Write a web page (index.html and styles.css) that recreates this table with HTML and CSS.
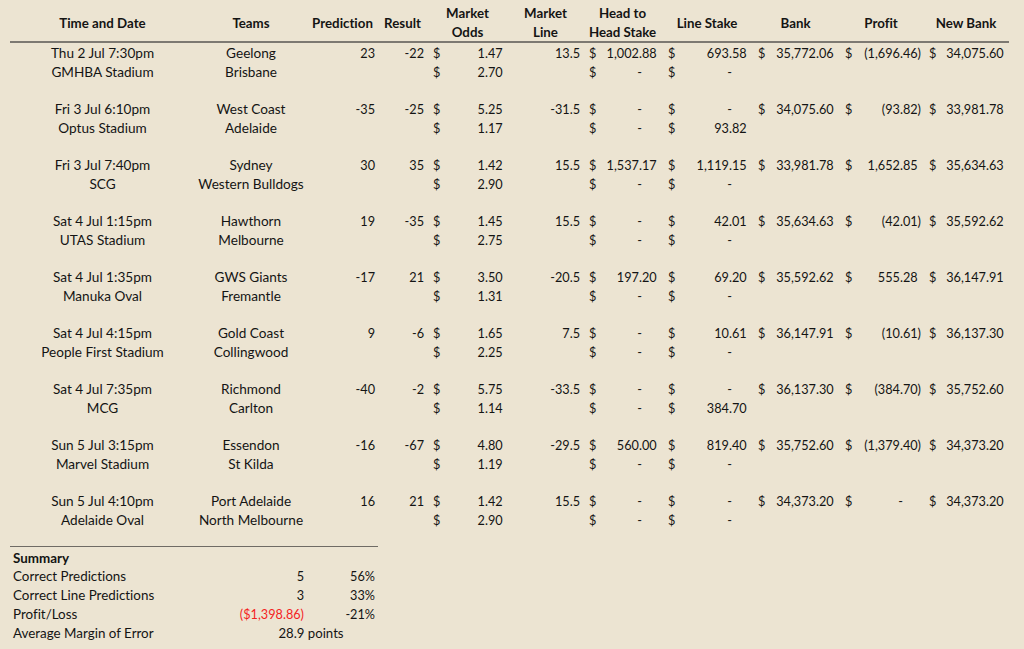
FILE: index.html
```html
<!DOCTYPE html>
<html lang="en">
<head>
<meta charset="utf-8">
<title>Tips</title>
<link rel="stylesheet" href="styles.css">
</head>
<body>
<div class="sheet">
  <div class="row head">
    <div class="h">Time and Date</div>
    <div class="h">Teams</div>
    <div class="h">Prediction</div>
    <div class="h">Result</div>
    <div class="h">Market<br>Odds</div>
    <div class="h">Market<br>Line</div>
    <div class="h">Head to<br>Head Stake</div>
    <div class="h">Line Stake</div>
    <div class="h">Bank</div>
    <div class="h">Profit</div>
    <div class="h">New Bank</div>
  </div>

  <div class="game">
    <div class="row">
      <div class="t">Thu 2 Jul 7:30pm</div><div class="t">Geelong</div><div class="r">23</div><div class="r">-22</div>
      <div class="acc"><span>$</span><span>1.47<i>)</i></span></div><div class="r">13.5</div>
      <div class="acc"><span>$</span><span>1,002.88<i>)</i></span></div>
      <div class="acc"><span>$</span><span>693.58<i>)</i></span></div>
      <div class="acc"><span>$</span><span>35,772.06<i>)</i></span></div>
      <div class="acc"><span>$</span><span>(1,696.46)</span></div>
      <div class="acc"><span>$</span><span>34,075.60<i>)</i></span></div>
    </div>
    <div class="row">
      <div class="t">GMHBA Stadium</div><div class="t">Brisbane</div><div></div><div></div>
      <div class="acc"><span>$</span><span>2.70<i>)</i></span></div><div></div>
      <div class="acc"><span>$</span><span>-<i>00)</i></span></div>
      <div class="acc"><span>$</span><span>-<i>00)</i></span></div>
    </div>
    <div class="row"></div>
  </div>

  <div class="game">
    <div class="row">
      <div class="t">Fri 3 Jul 6:10pm</div><div class="t">West Coast</div><div class="r">-35</div><div class="r">-25</div>
      <div class="acc"><span>$</span><span>5.25<i>)</i></span></div><div class="r">-31.5</div>
      <div class="acc"><span>$</span><span>-<i>00)</i></span></div>
      <div class="acc"><span>$</span><span>-<i>00)</i></span></div>
      <div class="acc"><span>$</span><span>34,075.60<i>)</i></span></div>
      <div class="acc"><span>$</span><span>(93.82)</span></div>
      <div class="acc"><span>$</span><span>33,981.78<i>)</i></span></div>
    </div>
    <div class="row">
      <div class="t">Optus Stadium</div><div class="t">Adelaide</div><div></div><div></div>
      <div class="acc"><span>$</span><span>1.17<i>)</i></span></div><div></div>
      <div class="acc"><span>$</span><span>-<i>00)</i></span></div>
      <div class="acc"><span>$</span><span>93.82<i>)</i></span></div>
    </div>
    <div class="row"></div>
  </div>

  <div class="game">
    <div class="row">
      <div class="t">Fri 3 Jul 7:40pm</div><div class="t">Sydney</div><div class="r">30</div><div class="r">35</div>
      <div class="acc"><span>$</span><span>1.42<i>)</i></span></div><div class="r">15.5</div>
      <div class="acc"><span>$</span><span>1,537.17<i>)</i></span></div>
      <div class="acc"><span>$</span><span>1,119.15<i>)</i></span></div>
      <div class="acc"><span>$</span><span>33,981.78<i>)</i></span></div>
      <div class="acc"><span>$</span><span>1,652.85<i>)</i></span></div>
      <div class="acc"><span>$</span><span>35,634.63<i>)</i></span></div>
    </div>
    <div class="row">
      <div class="t">SCG</div><div class="t">Western Bulldogs</div><div></div><div></div>
      <div class="acc"><span>$</span><span>2.90<i>)</i></span></div><div></div>
      <div class="acc"><span>$</span><span>-<i>00)</i></span></div>
      <div class="acc"><span>$</span><span>-<i>00)</i></span></div>
    </div>
    <div class="row"></div>
  </div>

  <div class="game">
    <div class="row">
      <div class="t">Sat 4 Jul 1:15pm</div><div class="t">Hawthorn</div><div class="r">19</div><div class="r">-35</div>
      <div class="acc"><span>$</span><span>1.45<i>)</i></span></div><div class="r">15.5</div>
      <div class="acc"><span>$</span><span>-<i>00)</i></span></div>
      <div class="acc"><span>$</span><span>42.01<i>)</i></span></div>
      <div class="acc"><span>$</span><span>35,634.63<i>)</i></span></div>
      <div class="acc"><span>$</span><span>(42.01)</span></div>
      <div class="acc"><span>$</span><span>35,592.62<i>)</i></span></div>
    </div>
    <div class="row">
      <div class="t">UTAS Stadium</div><div class="t">Melbourne</div><div></div><div></div>
      <div class="acc"><span>$</span><span>2.75<i>)</i></span></div><div></div>
      <div class="acc"><span>$</span><span>-<i>00)</i></span></div>
      <div class="acc"><span>$</span><span>-<i>00)</i></span></div>
    </div>
    <div class="row"></div>
  </div>

  <div class="game">
    <div class="row">
      <div class="t">Sat 4 Jul 1:35pm</div><div class="t">GWS Giants</div><div class="r">-17</div><div class="r">21</div>
      <div class="acc"><span>$</span><span>3.50<i>)</i></span></div><div class="r">-20.5</div>
      <div class="acc"><span>$</span><span>197.20<i>)</i></span></div>
      <div class="acc"><span>$</span><span>69.20<i>)</i></span></div>
      <div class="acc"><span>$</span><span>35,592.62<i>)</i></span></div>
      <div class="acc"><span>$</span><span>555.28<i>)</i></span></div>
      <div class="acc"><span>$</span><span>36,147.91<i>)</i></span></div>
    </div>
    <div class="row">
      <div class="t">Manuka Oval</div><div class="t">Fremantle</div><div></div><div></div>
      <div class="acc"><span>$</span><span>1.31<i>)</i></span></div><div></div>
      <div class="acc"><span>$</span><span>-<i>00)</i></span></div>
      <div class="acc"><span>$</span><span>-<i>00)</i></span></div>
    </div>
    <div class="row"></div>
  </div>

  <div class="game">
    <div class="row">
      <div class="t">Sat 4 Jul 4:15pm</div><div class="t">Gold Coast</div><div class="r">9</div><div class="r">-6</div>
      <div class="acc"><span>$</span><span>1.65<i>)</i></span></div><div class="r">7.5</div>
      <div class="acc"><span>$</span><span>-<i>00)</i></span></div>
      <div class="acc"><span>$</span><span>10.61<i>)</i></span></div>
      <div class="acc"><span>$</span><span>36,147.91<i>)</i></span></div>
      <div class="acc"><span>$</span><span>(10.61)</span></div>
      <div class="acc"><span>$</span><span>36,137.30<i>)</i></span></div>
    </div>
    <div class="row">
      <div class="t">People First Stadium</div><div class="t">Collingwood</div><div></div><div></div>
      <div class="acc"><span>$</span><span>2.25<i>)</i></span></div><div></div>
      <div class="acc"><span>$</span><span>-<i>00)</i></span></div>
      <div class="acc"><span>$</span><span>-<i>00)</i></span></div>
    </div>
    <div class="row"></div>
  </div>

  <div class="game">
    <div class="row">
      <div class="t">Sat 4 Jul 7:35pm</div><div class="t">Richmond</div><div class="r">-40</div><div class="r">-2</div>
      <div class="acc"><span>$</span><span>5.75<i>)</i></span></div><div class="r">-33.5</div>
      <div class="acc"><span>$</span><span>-<i>00)</i></span></div>
      <div class="acc"><span>$</span><span>-<i>00)</i></span></div>
      <div class="acc"><span>$</span><span>36,137.30<i>)</i></span></div>
      <div class="acc"><span>$</span><span>(384.70)</span></div>
      <div class="acc"><span>$</span><span>35,752.60<i>)</i></span></div>
    </div>
    <div class="row">
      <div class="t">MCG</div><div class="t">Carlton</div><div></div><div></div>
      <div class="acc"><span>$</span><span>1.14<i>)</i></span></div><div></div>
      <div class="acc"><span>$</span><span>-<i>00)</i></span></div>
      <div class="acc"><span>$</span><span>384.70<i>)</i></span></div>
    </div>
    <div class="row"></div>
  </div>

  <div class="game">
    <div class="row">
      <div class="t">Sun 5 Jul 3:15pm</div><div class="t">Essendon</div><div class="r">-16</div><div class="r">-67</div>
      <div class="acc"><span>$</span><span>4.80<i>)</i></span></div><div class="r">-29.5</div>
      <div class="acc"><span>$</span><span>560.00<i>)</i></span></div>
      <div class="acc"><span>$</span><span>819.40<i>)</i></span></div>
      <div class="acc"><span>$</span><span>35,752.60<i>)</i></span></div>
      <div class="acc"><span>$</span><span>(1,379.40)</span></div>
      <div class="acc"><span>$</span><span>34,373.20<i>)</i></span></div>
    </div>
    <div class="row">
      <div class="t">Marvel Stadium</div><div class="t">St Kilda</div><div></div><div></div>
      <div class="acc"><span>$</span><span>1.19<i>)</i></span></div><div></div>
      <div class="acc"><span>$</span><span>-<i>00)</i></span></div>
      <div class="acc"><span>$</span><span>-<i>00)</i></span></div>
    </div>
    <div class="row"></div>
  </div>

  <div class="game">
    <div class="row">
      <div class="t">Sun 5 Jul 4:10pm</div><div class="t">Port Adelaide</div><div class="r">16</div><div class="r">21</div>
      <div class="acc"><span>$</span><span>1.42<i>)</i></span></div><div class="r">15.5</div>
      <div class="acc"><span>$</span><span>-<i>00)</i></span></div>
      <div class="acc"><span>$</span><span>-<i>00)</i></span></div>
      <div class="acc"><span>$</span><span>34,373.20<i>)</i></span></div>
      <div class="acc"><span>$</span><span>-<i>00)</i></span></div>
      <div class="acc"><span>$</span><span>34,373.20<i>)</i></span></div>
    </div>
    <div class="row">
      <div class="t">Adelaide Oval</div><div class="t">North Melbourne</div><div></div><div></div>
      <div class="acc"><span>$</span><span>2.90<i>)</i></span></div><div></div>
      <div class="acc"><span>$</span><span>-<i>00)</i></span></div>
      <div class="acc"><span>$</span><span>-<i>00)</i></span></div>
    </div>
    <div class="row"></div>
  </div>

  <div class="summary">
    <div class="srow"><div class="l b">Summary</div></div>
    <div class="srow"><div class="l">Correct Predictions</div><div class="r">5</div><div class="r">56%</div></div>
    <div class="srow"><div class="l">Correct Line Predictions</div><div class="r">3</div><div class="r">33%</div></div>
    <div class="srow"><div class="l">Profit/Loss</div><div class="r neg">($1,398.86)</div><div class="r">-21%</div></div>
    <div class="srow"><div class="l">Average Margin of Error</div><div class="span">28.9 points</div></div>
  </div>
</div>
</body>
</html>
```

FILE: styles.css
```css
html, body {
  margin: 0;
  padding: 0;
  background: #ece4d2;
}
body {
  font-family: Lato, "Open Sans", "Liberation Sans", sans-serif;
  font-size: 12.7px;
  color: #141414;
  width: 1024px;
  height: 649px;
  overflow: hidden;
  font-variant-ligatures: none;
}
.sheet {
  margin-left: 10px;
  width: 999px;
}
.row, .srow {
  display: grid;
  grid-template-columns: 185px 112px 71px 49px 81px 75px 79px 90px 87px 84px 86px;
  box-sizing: border-box;
  height: 18.7px;
  padding-top: 2px;
  align-items: center;
  white-space: nowrap;
}
.head {
  box-sizing: content-box;
  height: 36.6px;
  padding-top: 4px;
  border-bottom: 2px solid #7d7972;
  font-weight: bold;
}
.h {
  text-align: center;
  line-height: 19px;
  font-size: 13.3px;
}
.t {
  text-align: center;
  font-size: 13.6px;
}
.r {
  text-align: right;
  padding-right: 3px;
}
.acc {
  display: flex;
  justify-content: space-between;
  padding: 0 2px 0 6px;
}
.acc i {
  visibility: hidden;
  font-style: normal;
}
.summary {
  width: 368px;
  border-top: 1px solid #6f6b65;
  margin-top: -1px;
}
.srow {
  height: 18.75px;
}
.l {
  padding-left: 3px;
  font-size: 13.4px;
}
.b {
  font-weight: bold;
}
.neg {
  color: #f41f1f;
}
.span {
  grid-column: 2 / 5;
  text-align: center;
  font-size: 13.2px;
}
```
